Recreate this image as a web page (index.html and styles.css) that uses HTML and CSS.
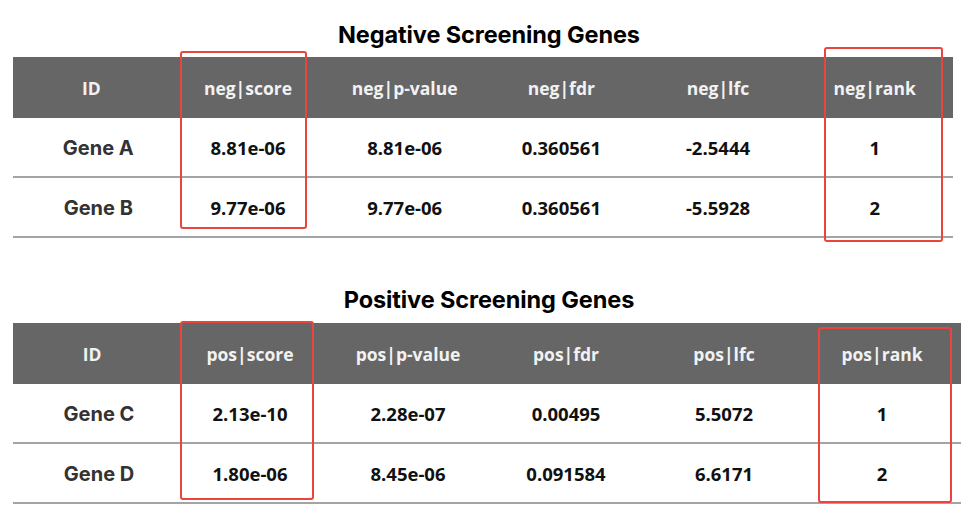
FILE: index.html
```html
<!DOCTYPE html>
<html lang="en">
<head>
<meta charset="utf-8">
<title>Screening Genes</title>
<link rel="stylesheet" href="styles.css">
</head>
<body>
<main class="page">
  <section class="block block-neg">
    <h2 class="title">Negative Screening Genes</h2>
    <div class="table table-neg">
      <div class="row head">
        <div class="cell">ID</div>
        <div class="cell">neg|score</div>
        <div class="cell">neg|p-value</div>
        <div class="cell">neg|fdr</div>
        <div class="cell">neg|lfc</div>
        <div class="cell">neg|rank</div>
      </div>
      <div class="row body">
        <div class="cell id">Gene A</div>
        <div class="cell">8.81e-06</div>
        <div class="cell">8.81e-06</div>
        <div class="cell">0.360561</div>
        <div class="cell">-2.5444</div>
        <div class="cell">1</div>
      </div>
      <div class="row body">
        <div class="cell id">Gene B</div>
        <div class="cell">9.77e-06</div>
        <div class="cell">9.77e-06</div>
        <div class="cell">0.360561</div>
        <div class="cell">-5.5928</div>
        <div class="cell">2</div>
      </div>
      <div class="mark mark-neg-score"></div>
      <div class="mark mark-neg-rank"></div>
    </div>
  </section>

  <section class="block block-pos">
    <h2 class="title">Positive Screening Genes</h2>
    <div class="table table-pos">
      <div class="row head">
        <div class="cell">ID</div>
        <div class="cell">pos|score</div>
        <div class="cell">pos|p-value</div>
        <div class="cell">pos|fdr</div>
        <div class="cell">pos|lfc</div>
        <div class="cell">pos|rank</div>
      </div>
      <div class="row body">
        <div class="cell id">Gene C</div>
        <div class="cell">2.13e-10</div>
        <div class="cell">2.28e-07</div>
        <div class="cell">0.00495</div>
        <div class="cell">5.5072</div>
        <div class="cell">1</div>
      </div>
      <div class="row body">
        <div class="cell id">Gene D</div>
        <div class="cell">1.80e-06</div>
        <div class="cell">8.45e-06</div>
        <div class="cell">0.091584</div>
        <div class="cell">6.6171</div>
        <div class="cell">2</div>
      </div>
      <div class="mark mark-pos-score"></div>
      <div class="mark mark-pos-rank"></div>
    </div>
  </section>
</main>
</body>
</html>
```

FILE: styles.css
```css
* { box-sizing: border-box; }

html, body {
  margin: 0;
  padding: 0;
  background: #ffffff;
}

.page {
  width: 978px;
  padding-top: 21px;
  display: flex;
  flex-direction: column;
  gap: 48px;
}

.block {
  display: flex;
  flex-direction: column;
  gap: 8px;
}

.block-pos {
  gap: 9px;
}

.title {
  margin: 0;
  height: 28px;
  line-height: 28px;
  text-align: center;
  font-family: "Inter", "Liberation Sans", sans-serif;
  font-weight: 700;
  font-size: 23.5px;
  color: #000;
  letter-spacing: -0.1px;
}

.table {
  position: relative;
  margin-left: 13px;
}

.table-neg { width: 940px; }
.table-pos { width: 948px; }

.row {
  display: grid;
  grid-template-columns: repeat(6, 1fr);
  align-items: center;
}

.head {
  height: 61px;
  background: #666666;
}

.body {
  height: 60px;
  border-bottom: 2px solid #a4a4a4;
}

.cell {
  text-align: center;
  font-family: "Open Sans", "Noto Sans", sans-serif;
  font-weight: 700;
  font-size: 18.5px;
  color: #111;
}

.head .cell {
  color: #f2f2f2;
  font-size: 17.5px;
}

.body .cell {
  padding-top: 1px;
}

.cell.id {
  font-family: "Inter", "Liberation Sans", sans-serif;
  font-size: 20px;
  color: #333;
  padding-left: 14px;
}

.mark {
  position: absolute;
  border: 2px solid #e9453e;
  border-radius: 3px;
}

.mark-neg-score { left: 167px; top: -6px; width: 127px; height: 178px; }
.mark-neg-rank  { left: 811px; top: -10px; width: 119px; height: 195px; }
.mark-pos-score { left: 167px; top: -2px; width: 134px; height: 179px; }
.mark-pos-rank  { left: 805px; top: 4px; width: 134px; height: 176px; }
```
